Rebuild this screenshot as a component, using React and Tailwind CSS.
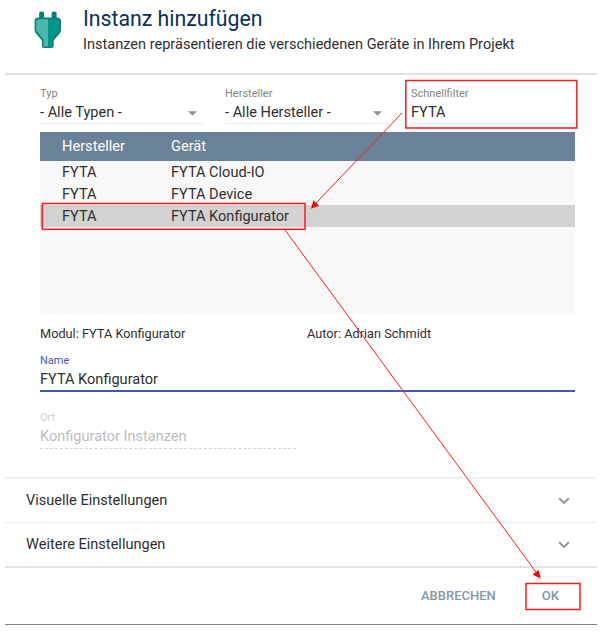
import React from "react";

const devices = ["FYTA Cloud-IO", "FYTA Device", "FYTA Konfigurator"];

function PlugIcon() {
  return (
    <svg viewBox="0 0 28 38" className="h-[38px] w-7 shrink-0">
      <rect x="5.1" y="0.5" width="5" height="9" rx="2" fill="#0a8073" />
      <rect x="17.6" y="0.5" width="5" height="9" rx="2" fill="#0a8073" />
      <path d="M4.5 6.5H23q4 0 4 4v8.2q0 2-1.2 3.5l-6.1 7.2v5.3q0 2.3-2.3 2.3h-7.2q-2.3 0-2.3-2.3v-5.3l-6.1-7.2Q.6 20.7.6 18.7V10.5q0-4 3.9-4z" fill="#0a8073" />
      <path d="M5 8.2H14V35.500H10.500q-1 0-1-1V28.500L3.200 21Q2.200 19.900 2.200 18.300V11q0-2.800 2.800-2.800z" fill="#4db6ac" />
      <path d="M14 8.200H22.600q2.800 0 2.800 2.800v7.300q0 1.600-1 2.700l-6.300 7.500v6q0 1-1 1H14z" fill="#009688" />
    </svg>
  );
}

function SelectField({ label, value, arrow, className }) {
  return (
    <div className={"flex h-[41px] flex-col border-b-[1.5px] border-[#ececec] " + className}>
      <span className="mt-[4px] text-[11px] leading-[14px] text-[#858585]">{label}</span>
      <div className="mt-[2px] flex items-center justify-between leading-[20px]">
        <span>{value}</span>
        {arrow && (
          <svg viewBox="0 0 10 5" className="mr-[7px] h-[5px] w-[9px]" fill="#929292">
            <path d="M0 0H10L5 5z" />
          </svg>
        )}
      </div>
    </div>
  );
}

function Section({ title, className }) {
  return (
    <div className={"flex items-center justify-between pl-[21px] pr-[27px] " + className}>
      <span>{title}</span>
      <svg viewBox="0 0 12 8" className="h-2 w-3" fill="none" stroke="#929292" strokeWidth="1.9">
        <path d="M1.2 1.3L6 6L10.8 1.3" />
      </svg>
    </div>
  );
}

export default function App() {
  return (
    <div className="relative h-[633px] w-[605px] overflow-hidden bg-white pl-[5px] pr-2 font-['Roboto',sans-serif] text-[14.55px] whitespace-nowrap text-[#303030]">
      <header className="flex h-[75px] border-b-2 border-[#e1e1e1] pl-[29px] pt-[11px]">
        <PlugIcon />
        <div className="-mt-[6px] ml-[21px]">
          <h1 className="text-[21.25px] leading-[28px] text-[#0c3156]">Instanz hinzufügen</h1>
          <p className="mt-[2px] leading-[20px]">Instanzen repräsentieren die verschiedenen Geräte in Ihrem Projekt</p>
        </div>
      </header>

      <main className="h-[402px] pl-[35px] pr-[22px] pt-[8px]">
        <div className="flex">
          <SelectField label="Typ" value="- Alle Typen -" arrow className="w-[164px]" />
          <SelectField label="Hersteller" value="- Alle Hersteller -" arrow className="ml-[21px] w-[164px]" />
          <SelectField label="Schnellfilter" value="FYTA" className="ml-[22px] w-[164px]" />
        </div>

        <div className="mt-2 h-[182px] bg-[#f8f8f8]">
          <div className="flex h-[29px] items-center bg-[#6a8298] pl-[22px] text-[14.6px] text-white">
            <span className="w-[109px]">Hersteller</span>
            <span>Gerät</span>
          </div>
          {devices.map((device, index) => (
            <div
              key={device}
              className={"flex h-[22px] items-center pl-[22px] pt-[2px] " + (index === 2 ? "bg-[#d2d2d2]" : "")}
            >
              <span className="w-[109px]">FYTA</span>
              <span>{device}</span>
            </div>
          ))}
        </div>

        <div className="mt-[11px] flex text-[12.75px] leading-[18px]">
          <span className="w-[267px]">Modul: FYTA Konfigurator</span>
          <span>Autor: Adrian Schmidt</span>
        </div>

        <div className="mt-[10px] flex h-[39px] flex-col border-b-2 border-[#4757b5]">
          <span className="mt-px text-[11px] leading-[14px] text-[#4757b5]">Name</span>
          <span className="mt-[2px] leading-[20px]">FYTA Konfigurator</span>
        </div>

        <div className="mt-[18px] flex h-[39px] w-[256px] flex-col border-b border-dashed border-[#d6d6d6]">
          <span className="mt-px text-[11px] leading-[14px] text-[#d0d0d0]">Ort</span>
          <span className="mt-[2px] leading-[20px] text-[#bdbdbd]">Konfigurator Instanzen</span>
        </div>
      </main>

      <Section title="Visuelle Einstellungen" className="h-[45px] border-t-2 border-[#f0f0f0]" />
      <Section title="Weitere Einstellungen" className="h-[46px] border-b-2 border-t border-[#e2e2e2] border-t-[#ebebeb]" />

      <footer className="flex h-[57px] items-center justify-end border-b border-[#828282] pr-[38px] text-[13px] font-medium text-[#8399ab]">
        <span>ABBRECHEN</span>
        <span className="ml-[46px]">OK</span>
      </footer>

      <svg viewBox="0 0 605 633" className="pointer-events-none absolute inset-0 h-[633px] w-[605px]" fill="none" stroke="#ff1a1a">
        <g strokeWidth="1.5">
          <rect x="405.8" y="80.5" width="171" height="47.5" />
          <rect x="42.3" y="203.5" width="262.7" height="25.8" />
          <rect x="526" y="583.5" width="54" height="26" />
        </g>
        <path d="M402 113L316 203M285 230L536 572" strokeWidth="1" />
        <path d="M311 208.8L313.4 200.3L319 205.7zM540.7 578.7L532.6 574.5L538.700 570z" fill="#f00" stroke="none" />
      </svg>
    </div>
  );
}
